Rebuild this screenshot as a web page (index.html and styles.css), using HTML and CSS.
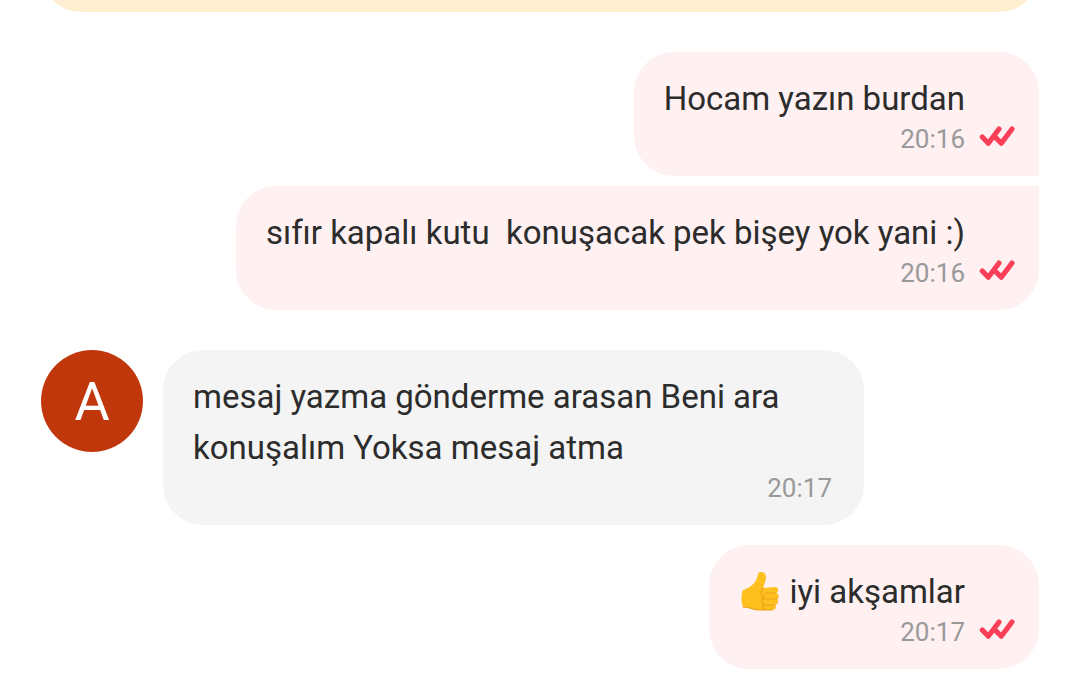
FILE: index.html
```html
<!DOCTYPE html>
<html lang="tr">
<head>
<meta charset="utf-8">
<meta name="viewport" content="width=device-width, initial-scale=1">
<title>Sohbet</title>
<link rel="stylesheet" href="styles.css">
</head>
<body>
<svg class="defs" aria-hidden="true">
  <symbol id="read" viewBox="0 0 36 24">
    <path d="M3.3 13 L9.3 19.2 L20 5 M16 13 L22.3 19.2 L33 5" fill="none" stroke="#fa4059" stroke-width="5.2" stroke-linecap="round" stroke-linejoin="round"/>
  </symbol>
</svg>
<main class="chat">
  <div class="notice"></div>
  <article class="bubble sent first">
    <p class="text">Hocam yazın burdan</p>
    <div class="meta"><time>20:16</time><svg class="read" role="img" aria-label="Okundu"><use href="#read"/></svg></div>
  </article>
  <article class="bubble sent last">
    <p class="text">sıfır kapalı kutu  konuşacak pek bişey yok yani :)</p>
    <div class="meta"><time>20:16</time><svg class="read" role="img" aria-label="Okundu"><use href="#read"/></svg></div>
  </article>
  <div class="incoming">
    <div class="avatar">A</div>
    <article class="bubble received">
      <p class="text">mesaj yazma gönderme arasan Beni ara konuşalım Yoksa mesaj atma</p>
      <div class="meta"><time>20:17</time></div>
    </article>
  </div>
  <article class="bubble sent">
    <p class="text"><svg class="thumb" viewBox="0 0 40 42" role="img" aria-label="👍">
      <path d="M2 20 C8 18 14 14 16 8 C17 4 17 2 20 2 C25 2 26 7 24 12 L22 18 L34 17 C38 17 38 22 35 23 C39 24 38 29 36 29 C38 31 37 35 34 35 C36 37 35 40 31 40 L18 40 C12 40 10 37 2 37 C0 32 0 24 2 20Z" fill="#fdc01e"/>
      <path d="M22 18 C19 21 20 26 23 27 C20 29 20 33 23 34 C21 36 21 39 24 40 M24 23 L35 23 M23 29 L36 29 M23 35 L34 35 M2 37 C10 37 12 40 18 40 L31 40" fill="none" stroke="#eba11a" stroke-width="1.2" stroke-linecap="round"/>
    </svg> iyi akşamlar</p>
    <div class="meta"><time>20:17</time><svg class="read" role="img" aria-label="Okundu"><use href="#read"/></svg></div>
  </article>
</main>
</body>
</html>
```
FILE: styles.css
```css
* { box-sizing: border-box; }
body { margin: 0; background: #fff; color: #2c2c2c; font-family: Roboto, "Noto Sans", sans-serif; }
.defs { position: absolute; width: 0; height: 0; }
.chat { display: flex; flex-direction: column; padding: 0 41px 24px; }
.notice { height: 80px; margin-top: -68px; background: #ffefd0; border-radius: 40px; margin-bottom: 40px; }
.bubble { padding: 21px 24px 22px 30px; border-radius: 40px; }
.sent { align-self: flex-end; background: #fff0f2; }
.first { border-bottom-right-radius: 0; margin-bottom: 10px; }
.last { border-top-right-radius: 0; margin-bottom: 40px; }
.text { margin: 0; font-size: 33px; line-height: 51px; white-space: pre-wrap; }
.sent .text { padding-right: 50px; }
.meta { display: flex; justify-content: flex-end; gap: 14px; font-size: 26px; line-height: 30px; color: #999; }
.read { width: 36px; height: 24px; }
.incoming { display: flex; align-items: flex-start; gap: 20px; margin-bottom: 20px; }
.avatar { flex: none; width: 102px; height: 102px; border-radius: 50%; background: #c1370c; color: #fff; font-size: 54px; line-height: 104px; text-align: center; }
.received { background: #f4f4f4; max-width: 701px; padding-right: 32px; }
.thumb { width: 40px; height: 42px; margin-left: 2px; vertical-align: -9px; }
```
